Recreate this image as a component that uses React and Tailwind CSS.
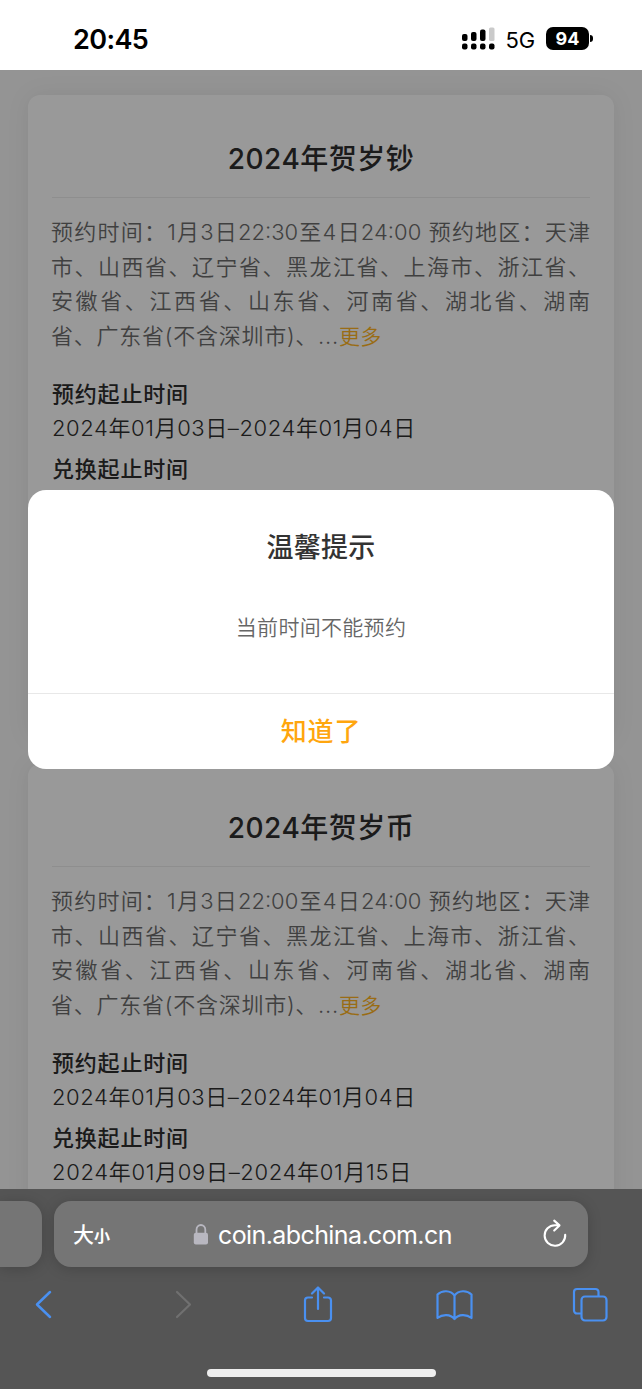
import React from "react";

const regions = [
  "市、山西省、辽宁省、黑龙江省、上海市、浙江省、",
  "安徽省、江西省、山东省、河南省、湖北省、湖南",
];

function Card({ title, time, exchange }) {
  return (
    <section className="flex h-[645px] shrink-0 flex-col rounded-[12px] bg-white px-6 shadow-[0_0_24px_rgba(0,0,0,0.07)]">
      <h2 className="flex h-[103px] items-center justify-center border-b border-[#ededed] pt-[25px] text-[28px] font-medium tracking-[0.5px] whitespace-nowrap text-[#2e2e2e]">
        {title}
      </h2>
      <div className="-ml-px pt-[17px] text-[22px] leading-[34.7px] font-[350] text-[#6c6c6c]">
        <p className="whitespace-nowrap [text-align-last:justify]">
          预约时间：{time}至4日24:00 预约地区：天津
        </p>
        {regions.map((line) => (
          <p key={line} className="whitespace-nowrap [text-align-last:justify]">{line}</p>
        ))}
        <p className="whitespace-nowrap tracking-[0.75px]">
          省、广东省(不含深圳市)、...<span className="text-[21px] tracking-[0.2px] text-[#ffb524]">更多</span>
        </p>
      </div>
      <dl className="mt-[22px] text-[22px] leading-[34px] whitespace-nowrap text-[#2e2e2e]">
        <dt className="font-medium tracking-[0.8px]">预约起止时间</dt>
        <dd className="font-[350] tracking-[0.6px]">2024年01月03日–2024年01月04日</dd>
        <dt className="mt-[7px] font-medium tracking-[0.8px]">兑换起止时间</dt>
        <dd className="font-[350] tracking-[0.68px]">{exchange}</dd>
      </dl>
    </section>
  );
}

function StatusBar() {
  return (
    <header className="flex h-[70px] shrink-0 items-center bg-white pt-[7px] pr-[49px] pl-[73px] text-black">
      <span className="pt-0.5 text-[27px] leading-none font-semibold tracking-[-0.6px]">20:45</span>
      <svg className="ml-auto" width="34" height="24" viewBox="0 0 34 24">
        <rect x="0" y="7" width="5.5" height="7" rx="2" />
        <rect x="9" y="5" width="5.5" height="9" rx="2" />
        <rect x="18" y="2.5" width="5.5" height="11.5" rx="2" />
        <rect x="27" y="0.5" width="5.5" height="13.5" rx="1.5" fill="#cacaca" />
        <rect x="0" y="16.5" width="5.5" height="6" rx="2" />
        <rect x="9" y="16.5" width="5.5" height="6" rx="2" />
        <rect x="18" y="16.5" width="5.5" height="6" rx="2" />
        <rect x="27" y="16.5" width="5.5" height="6" rx="2" />
      </svg>
      <span className="ml-[10px] pt-0.5 text-[22px] leading-none tracking-[-0.2px]">5G</span>
      <span className="ml-[11px] flex h-[23px] w-[43px] items-center justify-center rounded-[7px] bg-black text-[18px] leading-none font-bold text-white">94</span>
      <span className="ml-[1px] h-[7px] w-[3px] rounded-r-full bg-black" />
    </header>
  );
}

function Browser() {
  return (
    <footer className="flex h-[200px] shrink-0 flex-col bg-[#555]">
      <div className="mt-3 flex h-[66px] gap-3">
        <div className="w-[42px] rounded-r-[17px] bg-[#757575] shadow-[0_2px_14px_rgba(0,0,0,0.18)]" />
        <div className="flex w-[534px] items-center rounded-[17px] bg-[#757575] px-5 text-white shadow-[0_2px_14px_rgba(0,0,0,0.18)]">
          <span className="-ml-px flex items-baseline pt-0.5"><span className="text-[21px] font-medium">大</span><span className="text-[16px] font-bold">小</span></span>
          <svg className="ml-[83px]" width="16" height="21" viewBox="0 0 16 21">
            <path d="M3.5 10V5.8a4.4 4.8 0 0 1 8.8 0V10" fill="none" stroke="#b8b7c0" strokeWidth="1.8" />
            <rect x="0.8" y="8.7" width="14.2" height="11.8" rx="2" fill="#b8b7c0" />
          </svg>
          <span className="ml-[9px] pt-[3px] text-[25px] tracking-[-0.6px]">coin.abchina.com.cn</span>
          <svg className="ml-auto" width="26" height="30" viewBox="0 0 26 30" fill="none" stroke="white" strokeWidth="2.1" strokeLinecap="round" strokeLinejoin="round">
            <path d="M23.2 15.8A10.3 10.3 0 1 1 12.9 6.2H17M12.2 1.6l5.3 4.8-5.3 5.2" />
          </svg>
        </div>
      </div>
      <nav className="mt-2 flex h-[60px] shrink-0 items-center px-[34px] text-[#4a90f0]">
        <svg width="20" height="30" viewBox="0 0 20 30" fill="none" stroke="currentColor" strokeWidth="2.5" strokeLinecap="round" strokeLinejoin="round"><path d="M16 2 3 14.5 16 27" /></svg>
        <svg className="ml-[120px]" width="20" height="30" viewBox="0 0 20 30" fill="none" stroke="#707070" strokeWidth="2.2" strokeLinecap="round" strokeLinejoin="round"><path d="m3 2 13 12.5L3 27" /></svg>
        <svg className="ml-[109px]" width="32" height="38" viewBox="0 0 32 38" fill="none" stroke="currentColor" strokeWidth="2.2" strokeLinecap="round" strokeLinejoin="round"><path d="M9 11.5H5a3 3 0 0 0-3 3V32a3 3 0 0 0 3 3h20a3 3 0 0 0 3-3V14.5a3 3 0 0 0-3-3h-4M15 23V1.5M9 7.5l6-6 6 6" /></svg>
        <svg className="ml-[101px]" width="38" height="32" viewBox="0 0 38 32" fill="none" stroke="currentColor" strokeWidth="2.2" strokeLinecap="round" strokeLinejoin="round"><path d="M18.5 6.5V30M18.5 6.5C14.5 1 6 1 1.500 5.500V29c5-4 13-4 17 1 4-5 12-5 17-1V5.500C31 1 22.500 1 18.500 6.500" /></svg>
        <svg className="ml-[98px] shrink-0" width="36" height="36" viewBox="0 0 36 36" fill="none" stroke="currentColor" strokeWidth="2.2"><rect x="9.500" y="9.500" width="25" height="24" rx="3.500" /><path d="M9.500 26.500H5a3 3 0 0 1-3-3V5a3 3 0 0 1 3-3h18.500a3 3 0 0 1 3 3v4.500" /></svg>
      </nav>
      <div className="mx-auto mt-auto mb-3 h-2 w-[229px] rounded-full bg-[#eee]" />
    </footer>
  );
}

export default function App() {
  return (
    <div className="relative flex h-[1389px] w-[642px] flex-col overflow-hidden bg-white font-['Inter','Noto_Sans_CJK_SC',sans-serif]">
      <StatusBar />
      <main className="relative flex min-h-0 flex-1 flex-col gap-6 overflow-hidden bg-[#f7f7f7] px-7 pt-[25px]">
        <Card title="2024年贺岁钞" time="1月3日22:30" exchange="2024年01月09日–2024年01月15日" />
        <Card title="2024年贺岁币" time="1月3日22:00" exchange="2024年01月09日–2024年01月15日" />
        <div className="absolute inset-0 bg-black/40" />
        <div className="absolute top-[420px] left-7 flex h-[279px] w-[586px] flex-col rounded-[18px] bg-white text-center">
          <h3 className="pt-[38px] text-[27px] leading-[40px] font-medium tracking-[0.2px] text-[#333]">温馨提示</h3>
          <p className="mt-[45px] text-[21px] leading-[30px] font-[350] tracking-[0.3px] text-[#666]">当前时间不能预约</p>
          <button className="mt-auto h-[76px] border-t border-[#e8e8e8] text-[26px] font-medium tracking-[0.8px] text-[#ffa60e]">知道了</button>
        </div>
      </main>
      <Browser />
    </div>
  );
}
